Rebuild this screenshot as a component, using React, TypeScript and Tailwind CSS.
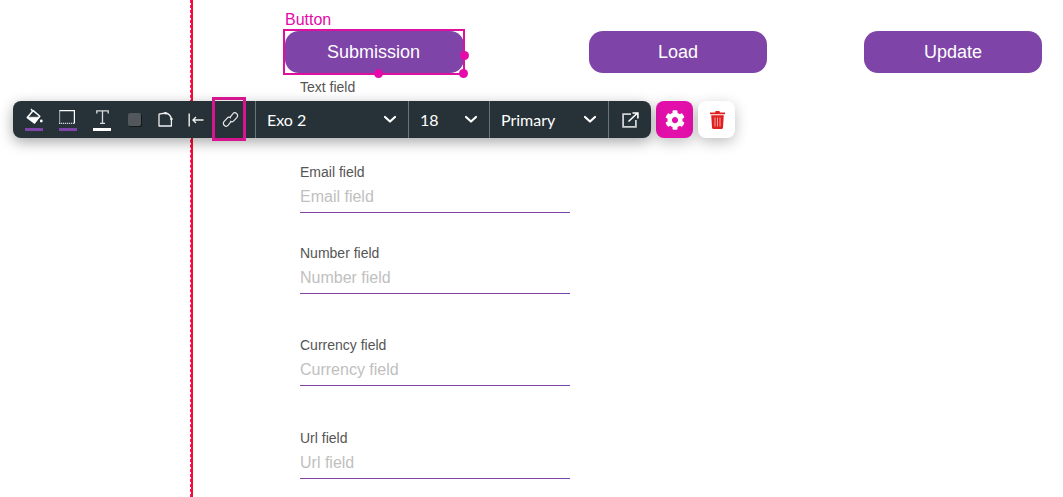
import React from "react";

function Field({ label, className }: { label: string; className: string }) {
  return (
    <div className={`w-[270px] flex flex-col ${className}`}>
      <div className="text-[14px] leading-[17px] text-[#555]">{label}</div>
      <div className="mt-[7px] h-[24px] text-[16px] leading-[18px] text-[#c0c0c0] border-b border-[#7e44a8] box-content">{label}</div>
    </div>
  );
}

function Chevron() {
  return (
    <svg width="14" height="9" viewBox="0 0 14 9" fill="none" stroke="#fff" strokeWidth="2.2" strokeLinecap="round" strokeLinejoin="round">
      <path d="M2 2l5 4.5L12 2" />
    </svg>
  );
}

function Select({ label, w }: { label: string; w: string }) {
  return (
    <div className={`flex items-center justify-between h-full border-r border-[#68737a] pl-[11px] pr-[11px] ${w}`}>
      <span className="text-[16px] text-white">{label}</span>
      <Chevron />
    </div>
  );
}

function ColorTool({ children, bar }: { children: React.ReactNode; bar: string }) {
  return (
    <div className="w-[18px] h-full flex flex-col items-center justify-start pt-[7px]">
      <div className="h-[20px] flex items-center justify-center">{children}</div>
      <div className={`w-[18px] h-[3px] ${bar}`} />
    </div>
  );
}

export default function App() {
  return (
    <div className="relative w-[1063px] h-[497px] overflow-hidden bg-white font-['Liberation_Sans',sans-serif]">
      <div className="absolute left-[190px] top-0 bottom-0 w-[3px] bg-[#fb0f1e] bg-clip-padding border-l border-dashed border-[#f0109f]" />

      <div className="pl-[285px] pt-[11px]">
        <div className="text-[16px] leading-[18px] h-[20px] text-[#e50aa9]">Button</div>
        <div className="flex h-[42px]">
          <div className="relative w-[179px] h-[42px] pr-[2px] rounded-[14px] bg-[#7e44a8] text-white text-[18px] flex items-center justify-center">
            Submission
            <div className="absolute -left-[2px] -top-[2px] w-[182px] h-[46px] border-2 border-[#e0109f]" />
            <div className="absolute left-[175px] top-[20px] w-[9px] h-[9px] rounded-full bg-[#e50aa9]" />
            <div className="absolute left-[174px] top-[38px] w-[9px] h-[9px] rounded-full bg-[#e50aa9]" />
            <div className="absolute left-[89px] top-[38px] w-[9px] h-[9px] rounded-full bg-[#e50aa9]" />
          </div>
          <div className="ml-[125px] w-[178px] rounded-[14px] bg-[#7e44a8] text-white text-[18px] flex items-center justify-center">Load</div>
          <div className="ml-[97px] w-[178px] rounded-[14px] bg-[#7e44a8] text-white text-[18px] flex items-center justify-center">Update</div>
        </div>
        <div className="pl-[15px]">
          <div className="mt-[6px] text-[14px] leading-[17px] text-[#555]">Text field</div>
          <Field label="Email field" className="mt-[68px]" />
          <Field label="Number field" className="mt-[32px]" />
          <Field label="Currency field" className="mt-[43px]" />
          <Field label="Url field" className="mt-[44px]" />
        </div>
      </div>

      {/* Floating toolbar */}
      <div className="absolute left-[13px] top-[101px] flex items-start gap-[5px] font-['Lato',sans-serif]">
        <div className="relative w-[638px] h-[37px] rounded-[8px] bg-[#263238] flex items-center shadow-[0_4px_14px_rgba(0,0,0,0.35)]">
          <div className="flex items-center h-full w-[243px] border-r border-[#68737a] pl-[12px]">
            <ColorTool bar="bg-[#7e44a8]">
              <svg width="17" height="17" viewBox="0 0 17 17" className="-mt-[3px]">
                <path d="M5 1l2 2.5" stroke="#fff" strokeWidth="1.4" fill="none" />
                <path d="M7.2 2.6l6.6 5.6L8.4 15 1.3 9.6z" fill="none" stroke="#fff" strokeWidth="1.5" strokeLinejoin="round" />
                <path d="M1.8 9.2h11.4L8.4 15.2z" fill="#fff" stroke="#fff" strokeWidth="0.6" strokeLinejoin="round" />
                <circle cx="15.3" cy="13" r="1.4" fill="#fff" />
              </svg>
            </ColorTool>
            <div className="w-[16px]" />
            <ColorTool bar="bg-[#7e44a8]">
              <svg width="16" height="14" viewBox="0 0 16 14" fill="none" stroke="#fff" strokeWidth="1.2" className="-mt-[3px] -ml-[3px]">
                <path d="M.6.6h14.8v12.8" />
                <path d="M.6.6v12.8h14.8" strokeDasharray="1 1" />
              </svg>
            </ColorTool>
            <div className="w-[16px]" />
            <ColorTool bar="bg-white">
              <svg width="13" height="14" viewBox="0 0 13 14" fill="none" stroke="#dcdcdc" strokeWidth="1.3" className="-mt-[3px]">
                <path d="M.8 3.5V.8h11.4v2.7M6.5.8v12.4M4 13.3h5" />
              </svg>
            </ColorTool>
            <div className="w-[17px]" />
            <div className="w-[13px] h-[13px] rounded-[2px] bg-[#51575b] shadow-[1px_1px_0_#14191c]" />
            <div className="w-[17px]" />
            <svg width="15" height="15" viewBox="0 0 15 15" fill="none" stroke="#f0f0f0" strokeWidth="1.3">
              <path d="M1 14V2.2L7.5 1C10.8 1.6 12.8 3.6 13.4 7V14z" strokeLinejoin="round" />
              <circle cx="13.4" cy="7" r="1.3" fill="#f0f0f0" stroke="none" />
              <circle cx="7.5" cy="1.3" r="1.3" fill="#f0f0f0" stroke="none" />
            </svg>
            <div className="w-[15px]" />
            <svg width="16" height="14" viewBox="0 0 16 14" fill="none" stroke="#f0f0f0" strokeWidth="1.4">
              <path d="M1.2 0.5v13M15.5 7H5M8 4L5 7l3 3" />
            </svg>
            <div className="w-[18px]" />
            <svg width="17" height="17" viewBox="0 0 17 17" fill="none" stroke="#e8e8e8" strokeWidth="1.2">
              <path d="M8.2 6.2l2.6-3.4a2.7 2.7 0 0 1 3.8-.3 2.7 2.7 0 0 1 .4 3.8l-3 3.4a2.7 2.7 0 0 1-3.8.3" />
              <path d="M8.8 10.8l-2.6 3.4a2.7 2.7 0 0 1-3.8.3 2.7 2.7 0 0 1-.4-3.8l3-3.4a2.7 2.7 0 0 1 3.8-.3" />
            </svg>
          </div>
          <Select label="Exo 2" w="w-[153px]" />
          <Select label="18" w="w-[81px]" />
          <Select label="Primary" w="w-[119px]" />
          <div className="flex-1 flex items-center justify-center">
            <svg width="17" height="16" viewBox="0 0 17 16" fill="none">
              <path d="M9 2.1H1.1v12.8h12.8V8" stroke="#cfd2d4" strokeWidth="1.8" />
              <path d="M6.5 9.5L15 1.5M10.5 1h5.4v5.4" stroke="#fff" strokeWidth="1.6" />
            </svg>
          </div>
          <div className="absolute left-[199px] -top-[4px] w-[34px] h-[44px] border-[3px] border-[#d4168f]" />
        </div>
        <div className="w-[37px] h-[37px] rounded-[8px] bg-[#e30faa] flex items-center justify-center shadow-[0_4px_14px_rgba(0,0,0,0.25)]">
          <svg width="20" height="20" viewBox="0 0 512 512" fill="#fff">
            <path d="M487.4 315.7l-42.6-24.6c4.3-23.2 4.3-47 0-70.2l42.6-24.6c4.9-2.8 7.1-8.6 5.5-14-11.1-35.6-30-67.8-54.7-94.6-3.8-4.1-10-5.1-14.8-2.3L380.8 110c-17.9-15.4-38.5-27.3-60.8-35.1V25.8c0-5.6-3.9-10.5-9.4-11.7-36.7-8.2-74.3-7.8-109.2 0-5.5 1.2-9.4 6.1-9.4 11.7V75c-22.2 7.9-42.8 19.8-60.8 35.1L88.7 85.5c-4.9-2.8-11-1.9-14.8 2.3-24.7 26.7-43.6 58.9-54.7 94.6-1.7 5.4.6 11.2 5.5 14L67.3 221c-4.3 23.2-4.3 47 0 70.2l-42.6 24.6c-4.9 2.8-7.1 8.6-5.5 14 11.1 35.6 30 67.8 54.7 94.6 3.8 4.1 10 5.1 14.8 2.3l42.6-24.6c17.9 15.4 38.5 27.3 60.8 35.1v49.2c0 5.6 3.9 10.5 9.4 11.7 36.7 8.2 74.3 7.8 109.2 0 5.5-1.2 9.4-6.1 9.4-11.7v-49.2c22.2-7.9 42.8-19.8 60.8-35.1l42.6 24.6c4.9 2.8 11 1.9 14.8-2.3 24.7-26.7 43.6-58.9 54.7-94.6 1.5-5.5-.7-11.3-5.6-14.1zM256 336c-44.1 0-80-35.9-80-80s35.9-80 80-80 80 35.9 80 80-35.9 80-80 80z" />
          </svg>
        </div>
        <div className="w-[37px] h-[37px] rounded-[8px] bg-white flex items-center justify-center shadow-[0_4px_14px_rgba(0,0,0,0.25)]">
          <svg width="15" height="19" viewBox="0 0 15 19" fill="#e02020" className="ml-[1px]">
            <path d="M0 2.5h5l.6-1.5h3.8l.6 1.5h5v1.8H0z" />
            <path d="M1.2 5.3h12.6L13 17.5c0 .8-.7 1.5-1.5 1.5h-8c-.8 0-1.5-.7-1.5-1.5z" />
            <path d="M5 7.5v9M7.5 7.5v9M10 7.5v9" stroke="#f8b0b0" strokeWidth="0.9" />
          </svg>
        </div>
      </div>
    </div>
  );
}
